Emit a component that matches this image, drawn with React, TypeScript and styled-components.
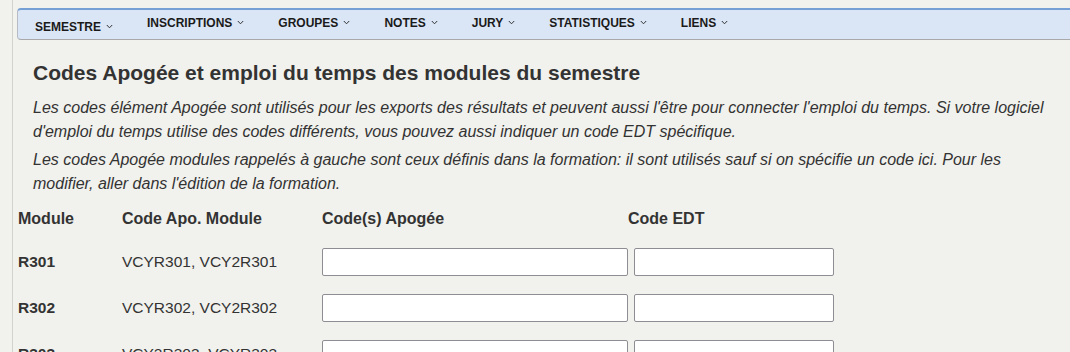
import React from 'react';
import styled, { createGlobalStyle } from 'styled-components';

const GlobalStyle = createGlobalStyle`
    html, body {
        margin: 0;
        padding: 0;
        background: #f1f1ed;
    }
    body {
        font-family: "Liberation Sans", Arial, Helvetica, sans-serif;
        color: #333;
    }
`;

interface ModuleRow {
    code: string;
    apo: string;
}

const menus = ['Semestre', 'Inscriptions', 'Groupes', 'Notes', 'Jury', 'Statistiques', 'Liens'];

const modules: ModuleRow[] = [
    { code: 'R301', apo: 'VCYR301, VCY2R301' },
    { code: 'R302', apo: 'VCYR302, VCY2R302' },
    { code: 'R303', apo: 'VCY2R303, VCYR303' },
];

const Chevron = () => (
    <svg width="7" height="5" viewBox="0 0 7 5" fill="none">
        <path d="M0.8 1 L3.5 3.8 L6.2 1" stroke="#333" strokeWidth="1" />
    </svg>
);

const App: React.FC = () => {
    return (
        <>
            <GlobalStyle />
            <Page>
                <Content>
                    <NavBar>
                        {menus.map((m, i) => (
                            <NavItem key={m} $first={i === 0}>
                                {m.toUpperCase()}
                                <Chevron />
                            </NavItem>
                        ))}
                    </NavBar>

                    <Intro>
                        <Title>Codes Apogée et emploi du temps des modules du semestre</Title>
                        <Help>
                            Les codes élément Apogée sont utilisés pour les exports des résultats et peuvent aussi
                            l'être pour connecter l'emploi du temps. Si votre logiciel d'emploi du temps utilise des
                            codes différents, vous pouvez aussi indiquer un code EDT spécifique.
                        </Help>
                        <Help>
                            Les codes Apogée modules rappelés à gauche sont ceux définis dans la formation: il sont
                            utilisés sauf si on spécifie un code ici. Pour les modifier, aller dans l'édition de la
                            formation.
                        </Help>
                    </Intro>

                    <Table>
                        <HeadCell>Module</HeadCell>
                        <HeadCell>Code Apo. Module</HeadCell>
                        <HeadCell>Code(s) Apogée</HeadCell>
                        <HeadCell>Code EDT</HeadCell>
                        {modules.map(mod => (
                            <React.Fragment key={mod.code}>
                                <ModCode>{mod.code}</ModCode>
                                <ApoCell>{mod.apo}</ApoCell>
                                <InputCell>
                                    <CodeInput $width={306} />
                                </InputCell>
                                <InputCell>
                                    <CodeInput $width={200} $offset={6} />
                                </InputCell>
                            </React.Fragment>
                        ))}
                    </Table>
                </Content>
            </Page>
        </>
    );
};

const Page = styled.div`
    height: 352px;
    overflow: hidden;
    padding-left: 12px;
`;

const Content = styled.div`
    border-left: 1px solid #d2d2cf;
    min-height: 352px;
    padding: 8px 0 0 4px;
`;

const NavBar = styled.div`
    display: flex;
    align-items: flex-start;
    height: 29px;
    margin-right: -10px;
    background: #dae6f6;
    border-top: 2px solid #74a0d6;
    border-bottom: 1px solid #a9a9a9;
    border-left: 1px solid #b5bcc6;
    border-radius: 4px;
    padding-left: 17px;
`;

const NavItem = styled.div<{ $first?: boolean }>`
    display: flex;
    align-items: center;
    gap: 5px;
    font-size: 12px;
    font-weight: bold;
    color: #1a1a1a;
    margin-top: ${props => (props.$first ? '10px' : '6px')};
    margin-right: 34px;

    svg {
        margin-top: -2px;
    }
`;

const Intro = styled.div`
    display: flex;
    flex-direction: column;
    gap: 4px;
    padding: 21px 15px 0 16px;
`;

const Title = styled.h2`
    margin: 0 0 7px;
    font-size: 21px;
    font-weight: bold;
    line-height: 24px;
    color: #333;
`;

const Help = styled.p`
    margin: 0;
    font-size: 16px;
    font-style: italic;
    line-height: 24px;
    color: #333;
`;

const Table = styled.div`
    display: grid;
    grid-template-columns: 104px 200px 306px 210px;
    grid-template-rows: 41px;
    grid-auto-rows: 46px;
    padding-left: 1px;
    margin-top: 2px;
`;

const HeadCell = styled.div`
    display: flex;
    align-items: center;
    font-size: 16px;
    font-weight: bold;
    color: #333;
`;

const ModCode = styled.div`
    display: flex;
    align-items: center;
    font-size: 15.5px;
    font-weight: bold;
    color: #333;
`;

const ApoCell = styled.div`
    display: flex;
    align-items: center;
    font-size: 15.5px;
    color: #333;
`;

const InputCell = styled.div`
    display: flex;
    align-items: center;
`;

const CodeInput = styled.input<{ $width: number; $offset?: number }>`
    box-sizing: border-box;
    width: ${props => props.$width}px;
    height: 28px;
    margin-left: ${props => props.$offset || 0}px;
    border: 1px solid #8d8d93;
    border-radius: 2px;
    background: #fff;
    padding: 2px 4px;
    font-size: 14px;
`;

export default App;
